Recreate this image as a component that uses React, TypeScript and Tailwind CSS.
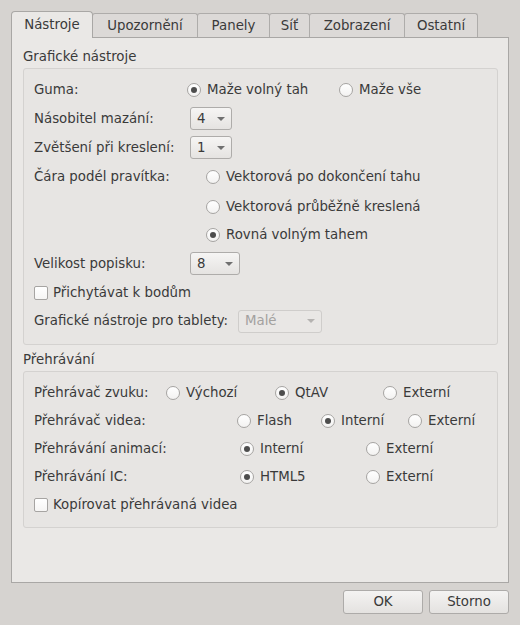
import type { ReactNode } from 'react';

const tabs = [
  { name: 'Nástroje', w: 'w-[82px]', active: true },
  { name: 'Upozornění', w: 'w-[106px]' },
  { name: 'Panely', w: 'w-[73px]' },
  { name: 'Síť', w: 'w-[41px]' },
  { name: 'Zobrazení', w: 'w-[96px]' },
  { name: 'Ostatní', w: 'w-[74px]' },
];

function Radio({ checked }: { checked?: boolean }) {
  return (
    <span className="w-[14px] h-[14px] shrink-0 rounded-full border border-[#a6a4a2] bg-gradient-to-b from-white to-[#f3f2f1] flex items-center justify-center">
      {checked && <span className="w-[6px] h-[6px] rounded-full bg-[#4d4d4d]" />}
    </span>
  );
}

function Option({ label, checked, className = '' }: { label: string; checked?: boolean; className?: string }) {
  return (
    <div className={`flex items-center gap-[6px] ${className}`}>
      <Radio checked={checked} />
      <span>{label}</span>
    </div>
  );
}

function Check({ label }: { label: string }) {
  return (
    <div className="flex items-center gap-[5px]">
      <span className="w-[14px] h-[14px] shrink-0 rounded-[2px] border border-[#a6a4a2] bg-gradient-to-b from-white to-[#f6f5f4]" />
      <span>{label}</span>
    </div>
  );
}

function Combo({ value, className = '', disabled }: { value: string; className?: string; disabled?: boolean }) {
  return (
    <div
      className={`h-[23px] flex items-center justify-between pl-[6px] pr-[6px] rounded-[3px] border ${
        disabled
          ? 'border-[#cfcdcb] bg-[#e9e7e5] text-[#a3a19f]'
          : 'border-[#aeacaa] bg-gradient-to-b from-[#f6f5f4] to-[#e5e3e1]'
      } ${className}`}
    >
      <span>{value}</span>
      <span
        className={`w-0 h-0 border-l-[4px] border-r-[4px] border-t-[4px] border-l-transparent border-r-transparent ${
          disabled ? 'border-t-[#b5b3b1]' : 'border-t-[#707070]'
        }`}
      />
    </div>
  );
}

function Row({ h, children }: { h: string; children: ReactNode }) {
  return <div className={`flex items-center ${h}`}>{children}</div>;
}

export default function App() {
  return (
    <div
      className="w-[520px] h-[625px] bg-[#d6d3d0] text-[#3a3a3a] text-[13.333px] leading-[16px] overflow-hidden"
      style={{ fontFamily: '"DejaVu Sans", "Noto Sans", sans-serif' }}
    >
      {/* záložky */}
      <div className="flex items-end pl-[11px] pt-[11px]">
        {tabs.map((t, i) =>
          t.active ? (
            <div
              key={t.name}
              className={`${t.w} h-[27px] -mb-px relative z-10 flex items-center justify-center rounded-t-[4px] border border-b-0 border-[#a9a7a5] bg-[#eae8e6]`}
            >
              {t.name}
            </div>
          ) : (
            <div
              key={t.name}
              className={`${t.w} h-[24px] ${i > 0 ? '-ml-px' : ''} flex items-center justify-center rounded-t-[3px] border border-b-0 border-[#aeacaa] bg-[#dcd9d7]`}
            >
              {t.name}
            </div>
          )
        )}
      </div>

      {/* panel */}
      <div className="ml-[11px] w-[498px] h-[546px] border border-[#a9a7a5] bg-[#eae8e6] pl-[11px] pt-[11px]">
        <div className="h-[16px]">Grafické nástroje</div>
        <div className="mt-[3px] w-[475px] h-[277px] rounded-[3px] border border-[#d4d2d0] bg-[#e7e5e3] pl-[10px] pt-[7px]">
          <Row h="h-[28px]">
            <span className="w-[153px]">Guma:</span>
            <Option label="Maže volný tah" checked className="w-[152px]" />
            <Option label="Maže vše" />
          </Row>
          <Row h="h-[29px]">
            <span className="w-[156px]">Násobitel mazání:</span>
            <Combo value="4" className="w-[42px]" />
          </Row>
          <Row h="h-[29px]">
            <span className="w-[156px]">Zvětšení při kreslení:</span>
            <Combo value="1" className="w-[42px]" />
          </Row>
          <Row h="h-[30px]">
            <span className="w-[172px]">Čára podél pravítka:</span>
            <Option label="Vektorová po dokončení tahu" />
          </Row>
          <Row h="h-[29px]">
            <span className="w-[172px]" />
            <Option label="Vektorová průběžně kreslená" />
          </Row>
          <Row h="h-[28px]">
            <span className="w-[172px]" />
            <Option label="Rovná volným tahem" checked />
          </Row>
          <Row h="h-[29px]">
            <span className="w-[156px]">Velikost popisku:</span>
            <Combo value="8" className="w-[50px]" />
          </Row>
          <Row h="h-[29px]">
            <Check label="Přichytávat k bodům" />
          </Row>
          <Row h="h-[28px]">
            <span className="w-[204px]">Grafické nástroje pro tablety:</span>
            <Combo value="Malé" className="w-[84px]" disabled />
          </Row>
        </div>

        <div className="mt-[7px] h-[16px]">Přehrávání</div>
        <div className="mt-[3px] w-[475px] h-[157px] rounded-[3px] border border-[#d4d2d0] bg-[#e7e5e3] pl-[10px] pt-[6px]">
          <Row h="h-[29px]">
            <span className="w-[132px]">Přehrávač zvuku:</span>
            <Option label="Výchozí" className="w-[109px]" />
            <Option label="QtAV" checked className="w-[108px]" />
            <Option label="Externí" />
          </Row>
          <Row h="h-[28px]">
            <span className="w-[203px]">Přehrávač videa:</span>
            <Option label="Flash" className="w-[84px]" />
            <Option label="Interní" checked className="w-[87px]" />
            <Option label="Externí" />
          </Row>
          <Row h="h-[28px]">
            <span className="w-[206px]">Přehrávání animací:</span>
            <Option label="Interní" checked className="w-[126px]" />
            <Option label="Externí" />
          </Row>
          <Row h="h-[28px]">
            <span className="w-[206px]">Přehrávání IC:</span>
            <Option label="HTML5" checked className="w-[126px]" />
            <Option label="Externí" />
          </Row>
          <Row h="h-[28px]">
            <Check label="Kopírovat přehrávaná videa" />
          </Row>
        </div>
      </div>

      {/* tlačítka */}
      <div className="flex justify-end gap-[6px] pr-[11px] mt-[7px]">
        {['OK', 'Storno'].map((b) => (
          <button
            key={b}
            className="w-[80px] h-[24px] rounded-[3px] border border-[#adaba9] bg-gradient-to-b from-[#f4f3f2] to-[#e4e2e0] text-[#3a3a3a]"
          >
            {b}
          </button>
        ))}
      </div>
    </div>
  );
}
